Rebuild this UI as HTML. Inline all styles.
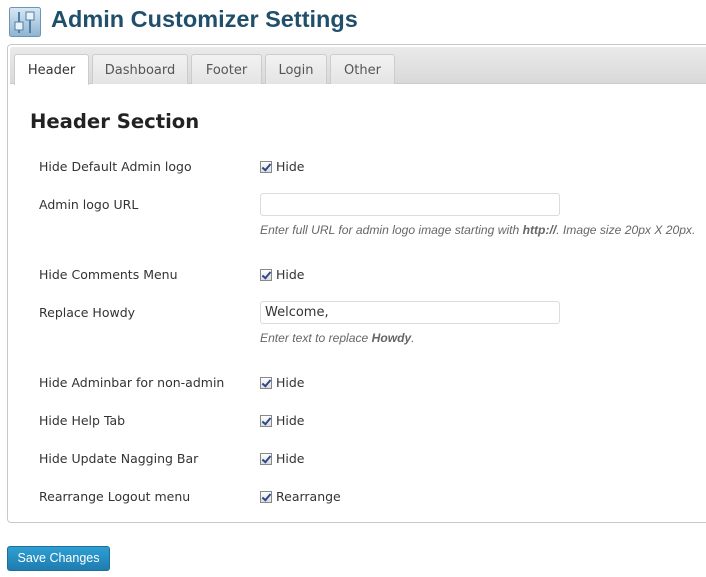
<!DOCTYPE html>
<html><head><style>
*{margin:0;padding:0;box-sizing:border-box}
body{width:706px;height:577px;background:#fff;position:relative;overflow:hidden;font-family:"DejaVu Sans",Verdana,sans-serif;font-size:12.5px;color:#333}
.a{position:absolute;white-space:nowrap}
h1{position:absolute;left:51px;top:6px;font-family:"Liberation Sans",Arial,sans-serif;font-weight:bold;font-size:23.5px;color:#1f4f6b}
.box{position:absolute;left:7px;top:44px;width:710px;height:479px;border:1px solid #c9c9c9;border-radius:4px}
.bar{position:absolute;left:10px;top:47px;width:700px;height:37px;background:linear-gradient(#eaeaea,#d9d9d9);border-bottom:1px solid #ccc;border-radius:3px 0 0 0}
.tab{position:absolute;top:54px;height:30px;border:1px solid #ccc;border-bottom:none;border-radius:3px 3px 0 0;background:linear-gradient(#f2f2f2,#e4e4e4);color:#555;font-size:13px;text-align:center;line-height:31px}
.tab.on{background:#fff;color:#333;height:31px}
.lbl{left:39px}
.cb{position:absolute;left:260px;width:12px;height:12px;border:1px solid #888;background:linear-gradient(#fff,#ddd)}
.cb:after{content:"";position:absolute;left:3px;top:0px;width:3px;height:7px;border:solid #2d4a8c;border-width:0 2px 2px 0;transform:rotate(40deg)}
.inp{position:absolute;left:260px;width:300px;height:23px;border:1px solid #dcdcdc;border-radius:3px;padding:3px 4px;font-size:13px;color:#333}
.d{position:absolute;left:260px;font-family:"Liberation Sans",Arial,sans-serif;font-style:italic;font-size:12.1px;color:#666}
</style></head><body>
<svg class="a" style="left:9px;top:7px" width="32" height="30" viewBox="0 0 32 30">
<defs><linearGradient id="g" x1="0" y1="0" x2="0" y2="1"><stop offset="0" stop-color="#d8e8f4"/><stop offset="1" stop-color="#8fb3d0"/></linearGradient></defs>
<rect x="0.5" y="0.5" width="31" height="29" rx="2" fill="url(#g)" stroke="#6b95b8"/>
<rect x="9" y="5" width="2" height="21" fill="#4f7fa8"/><rect x="6" y="15" width="8" height="8" fill="#e8f2fa" stroke="#4f7fa8"/>
<rect x="20" y="5" width="2" height="21" fill="#4f7fa8"/><rect x="17" y="5" width="8" height="8" fill="#e8f2fa" stroke="#4f7fa8"/>
</svg>
<h1>Admin Customizer Settings</h1>
<div class="box"></div>
<div class="bar"></div>
<div class="tab on" style="left:14px;width:75px">Header</div>
<div class="tab" style="left:92px;width:96px">Dashboard</div>
<div class="tab" style="left:191px;width:71px">Footer</div>
<div class="tab" style="left:265px;width:62px">Login</div>
<div class="tab" style="left:330px;width:65px">Other</div>
<div class="a" style="left:30px;top:110px;font-size:19.6px;font-weight:bold;color:#222">Header Section</div>

<div class="a lbl" style="top:159px">Hide Default Admin logo</div>
<div class="cb" style="top:161px"></div><div class="a" style="left:276px;top:159px">Hide</div>

<div class="a lbl" style="top:197px">Admin logo URL</div>
<div class="inp" style="top:193px"></div>
<div class="d" style="top:223px">Enter full URL for admin logo image starting with <b>http://</b>. Image size 20px X 20px.</div>

<div class="a lbl" style="top:267px">Hide Comments Menu</div>
<div class="cb" style="top:269px"></div><div class="a" style="left:276px;top:267px">Hide</div>

<div class="a lbl" style="top:305px">Replace Howdy</div>
<div class="inp" style="top:301px">Welcome,</div>
<div class="d" style="top:331px">Enter text to replace <b>Howdy</b>.</div>

<div class="a lbl" style="top:375px">Hide Adminbar for non-admin</div>
<div class="cb" style="top:377px"></div><div class="a" style="left:276px;top:375px">Hide</div>

<div class="a lbl" style="top:413px">Hide Help Tab</div>
<div class="cb" style="top:415px"></div><div class="a" style="left:276px;top:413px">Hide</div>

<div class="a lbl" style="top:451px">Hide Update Nagging Bar</div>
<div class="cb" style="top:453px"></div><div class="a" style="left:276px;top:451px">Hide</div>

<div class="a lbl" style="top:489px">Rearrange Logout menu</div>
<div class="cb" style="top:491px"></div><div class="a" style="left:276px;top:489px">Rearrange</div>

<div class="a" style="left:7px;top:546px;width:103px;height:25px;border:1px solid #1f6f9a;border-radius:3px;background:linear-gradient(#2e9fd2,#1e7cb0);color:#fff;font-family:'Liberation Sans',Arial,sans-serif;font-size:12.5px;text-align:center;line-height:23px">Save Changes</div>
</body></html>
